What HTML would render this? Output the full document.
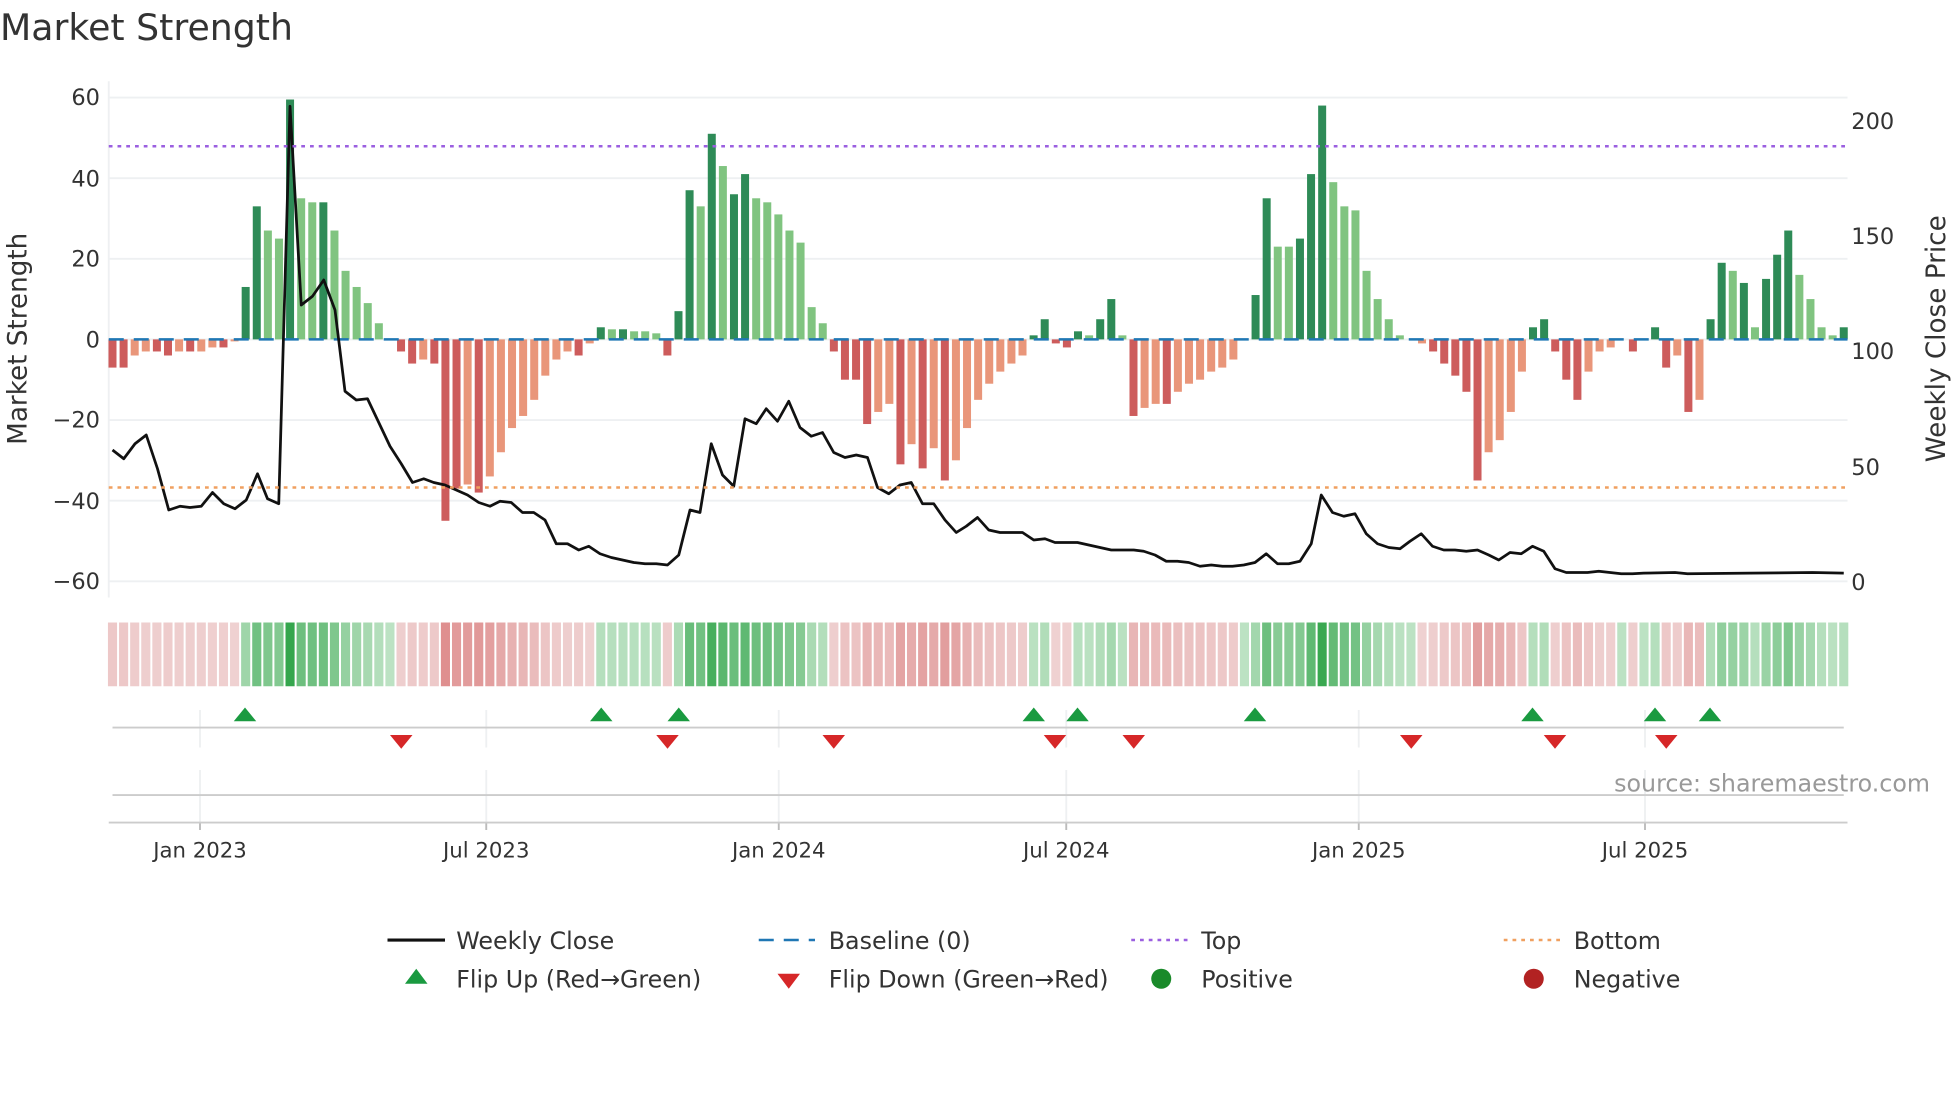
<!DOCTYPE html>
<html><head><meta charset="utf-8"><style>
html,body{margin:0;padding:0;background:#fff;}
svg{display:block;font-family:"DejaVu Sans","Liberation Sans",sans-serif;}
</style></head><body>
<svg id="s" width="1960" height="1102" viewBox="0 0 1568 881.6" xmlns="http://www.w3.org/2000/svg">
<rect width="1568" height="882" fill="#fff"/>
<text x="0" y="32" font-size="29" fill="#333">Market Strength</text>
<g id="grid"></g>
<g id="bars"></g>
<g id="heat"></g>
<g id="marks"></g>
<polyline id="price" fill="none" stroke="#111" stroke-width="2.2" stroke-linejoin="round"/>
<line x1="87" y1="117" x2="1478" y2="117" stroke="#9b5fe0" stroke-width="2" stroke-dasharray="3,4"/>
<line x1="87" y1="390" x2="1478" y2="390" stroke="#f0a060" stroke-width="2" stroke-dasharray="3,4"/>
<g font-size="18" fill="#333" text-anchor="end">
<text x="80" y="84">60</text><text x="80" y="149">40</text><text x="80" y="213">20</text><text x="80" y="278">0</text><text x="80" y="342">−20</text><text x="80" y="407">−40</text><text x="80" y="471">−60</text>
</g>
<g font-size="18" fill="#333">
<text x="1481" y="103">200</text><text x="1481" y="195">150</text><text x="1481" y="287">100</text><text x="1481" y="380">50</text><text x="1481" y="472">0</text>
</g>
<text transform="translate(21,271) rotate(-90)" font-size="21" fill="#333" text-anchor="middle">Market Strength</text>
<text transform="translate(1556,271) rotate(-90)" font-size="21" fill="#333" text-anchor="middle">Weekly Close Price</text>
<line x1="90" y1="582" x2="1475" y2="582" stroke="#ccc" stroke-width="1.5"/>
<line x1="90" y1="636" x2="1475" y2="636" stroke="#ccc" stroke-width="1.5"/>
<line x1="87" y1="658" x2="1478" y2="658" stroke="#ccc" stroke-width="1.5"/>
<text x="1544" y="633" font-size="19" fill="#999" text-anchor="end">source: sharemaestro.com</text>
<g font-size="17" fill="#333" text-anchor="middle" id="xl"></g>
<g font-size="19" fill="#333">
<line x1="310" y1="752" x2="356" y2="752" stroke="#111" stroke-width="2.5"/><text x="365" y="759">Weekly Close</text>
<line x1="607" y1="752" x2="652" y2="752" stroke="#1f77b4" stroke-width="2" stroke-dasharray="12,8"/><text x="663" y="759">Baseline (0)</text>
<line x1="905" y1="752" x2="950" y2="752" stroke="#9b5fe0" stroke-width="2" stroke-dasharray="3,4"/><text x="961" y="759">Top</text>
<line x1="1203" y1="752" x2="1248" y2="752" stroke="#f0a060" stroke-width="2" stroke-dasharray="3,4"/><text x="1259" y="759">Bottom</text>
<polygon points="333,775 342,787 324,787" fill="#1a9a40"/><text x="365" y="790">Flip Up (Red→Green)</text>
<polygon points="622,779 640,779 631,791" fill="#d62728"/><text x="663" y="790">Flip Down (Green→Red)</text>
<circle cx="929" cy="783" r="8" fill="#1a8a2a"/><text x="961" y="790">Positive</text>
<circle cx="1227" cy="783" r="8" fill="#b22222"/><text x="1259" y="790">Negative</text>
</g>
</svg>
<script>
const NS="http://www.w3.org/2000/svg";
function el(p,t,a){const e=document.createElementNS(NS,t);for(const k in a)e.setAttribute(k,a[k]);document.getElementById(p).appendChild(e);return e;}
[78,142.5,207,271.5,336,400.5,465].forEach(y=>el('grid','line',{x1:87,x2:1478,y1:y,y2:y,stroke:'#eef0f2','stroke-width':1.5}));
el('grid','line',{x1:87,x2:87,y1:65,y2:478,stroke:'#eef0f2','stroke-width':1.5});
const ticks=[[160,'Jan 2023'],[389,'Jul 2023'],[623,'Jan 2024'],[853,'Jul 2024'],[1087,'Jan 2025'],[1316,'Jul 2025']];
ticks.forEach(([x,t])=>{
 el('grid','line',{x1:x,x2:x,y1:568,y2:598,stroke:'#eef0f2','stroke-width':1.5});
 el('grid','line',{x1:x,x2:x,y1:616,y2:658,stroke:'#eef0f2','stroke-width':1.5});
 el('grid','line',{x1:x,x2:x,y1:658,y2:664,stroke:'#bbb','stroke-width':1.5});
 const tx=el('xl','text',{x:x,y:686});tx.textContent=t;
});
const d=[[-7,1],[-7,1],[-4,0],[-3,0],[-3,1],[-4,1],[-3,0],[-3,1],[-3,0],[-2,0],[-2,1],[-0.5,0],
[13,1],[33,1],[27,0],[25,0],[59.5,1],[35,0],[34,0],[34,1],[27,0],[17,0],[13,0],[9,0],[4,0],[0,0],
[-3,1],[-6,1],[-5,0],[-6,1],[-45,1],[-37,1],[-36,0],[-38,1],[-34,0],[-28,0],[-22,0],[-19,0],[-15,0],[-9,0],[-5,0],[-3,0],[-4,1],[-1,0],
[3,1],[2.5,0],[2.5,1],[2,0],[2,0],[1.5,0],[-4,1],
[7,1],[37,1],[33,0],[51,1],[43,0],[36,1],[41,1],[35,0],[34,0],[31,0],[27,0],[24,0],[8,0],[4,0],
[-3,1],[-10,1],[-10,1],[-21,1],[-18,0],[-16,0],[-31,1],[-26,0],[-32,1],[-27,0],[-35,1],[-30,0],[-22,0],[-15,0],[-11,0],[-8,0],[-6,0],[-4,0],
[1,1],[5,1],[-1,1],[-2,1],[2,1],[1,0],[5,1],[10,1],[1,0],
[-19,1],[-17,0],[-16,0],[-16,1],[-13,0],[-11,0],[-10,0],[-8,0],[-7,0],[-5,0],[0,0],
[11,1],[35,1],[23,0],[23,0],[25,1],[41,1],[58,1],[39,0],[33,0],[32,0],[17,0],[10,0],[5,0],[1,0],[0,0],
[-1,0],[-3,1],[-6,1],[-9,1],[-13,1],[-35,1],[-28,0],[-25,0],[-18,0],[-8,0],
[3,1],[5,1],[-3,1],[-10,1],[-15,1],[-8,0],[-3,0],[-2,0],[0,0],[-3,1],[0,0],[3,1],[-7,1],[-4,0],[-18,1],[-15,0],
[5,1],[19,1],[17,0],[14,1],[3,0],[15,1],[21,1],[27,1],[16,0],[10,0],[3,0],[1,0],[3,1]];
const n=d.length, x0=90, step=(1475-90)/(n-1), bw=6.4, z=271.5, k=3.225;
d.forEach(([v,dk],i)=>{
 const x=x0+i*step;
 let c=v>=0?(dk?'#2e8b57':'#80c480'):(dk?'#cd5c5c':'#e9967a');
 const h=Math.abs(v)*k;
 if(h>0.5) el('bars','rect',{x:x-bw/2,y:v>=0?z-h:z,width:bw,height:h,fill:c});
 const a=Math.min(1,Math.abs(v)/60);
 let col;
 if(v>=0){const t=0.15+0.85*a;col=`rgb(${Math.round(212-t*160)},${Math.round(236-t*70)},${Math.round(216-t*140)})`;}
 else{const t=0.1+0.9*a;col=`rgb(${Math.round(242-t*25)},${Math.round(220-t*100)},${Math.round(220-t*100)})`;}
 el('heat','rect',{x:x-step/2+0.8,y:498,width:step-1.6,height:51,fill:col});
});
el('bars','line',{x1:87,x2:1478,y1:z,y2:z,stroke:'#1f77b4','stroke-width':2,'stroke-dasharray':'12,8'});
const P=[[90,360],[99,367],[108,355],[117,348],[126,375],[135,408],[144,405],[152,406],[161,405],[170,394],[179,403],[188,407],[197,400],[206,379],[214,399],[223,403],[232,85],[241,244],[250,237],[259,224],[268,248],[276,313],[285,320],[294,319],[303,338],[312,357],[321,371],[330,386],[339,383],[347,386],[356,388],[365,392],[374,396],[383,402],[392,405],[400,401],[409,402],[418,410],[427,410],[436,416],[445,435],[454,435],[463,440],[471,437],[480,443],[489,446],[498,448],[507,450],[516,451],[525,451],[534,452],[543,444],[552,408],[560,410],[569,355],[578,380],[587,389],[596,335],[605,339],[613,327],[622,337],[631,321],[640,342],[649,349],[658,346],[667,362],[676,366],[685,364],[694,366],[702,390],[711,395],[720,388],[729,386],[738,403],[747,403],[756,416],[765,426],[773,421],[782,414],[791,424],[800,426],[809,426],[818,426],[827,432],[836,431],[844,434],[853,434],[862,434],[871,436],[880,438],[889,440],[898,440],[907,440],[915,441],[924,444],[933,449],[942,449],[951,450],[960,453],[969,452],[978,453],[986,453],[995,452],[1004,450],[1013,443],[1022,451],[1031,451],[1040,449],[1049,435],[1057,396],[1066,410],[1075,413],[1084,411],[1093,427],[1102,435],[1111,438],[1120,439],[1128,433],[1137,427],[1146,437],[1155,440],[1164,440],[1173,441],[1182,440],[1191,444],[1199,448],[1208,442],[1217,443],[1226,437],[1235,441],[1244,455],[1253,458],[1262,458],[1270,458],[1279,457],[1288,458],[1297,459],[1306,459],[1315,458.5],[1340,458],[1350,459],[1400,458.5],[1450,458],[1475,458.5]];
document.getElementById('price').setAttribute('points',P.map(p=>p.join(',')).join(' '));
[196,481,543,827,862,1004,1226,1324,1368].forEach(x=>el('marks','polygon',{points:`${x},566 ${x+9},577 ${x-9},577`,fill:'#1a9a40'}));
[321,534,667,844,907,1129,1244,1333].forEach(x=>el('marks','polygon',{points:`${x-9},588 ${x+9},588 ${x},599`,fill:'#d62728'}));
</script>
</body></html>
